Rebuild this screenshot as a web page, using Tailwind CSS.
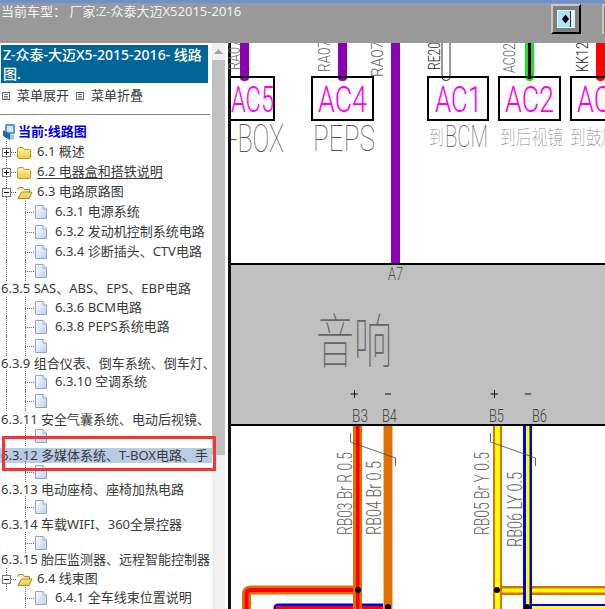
<!DOCTYPE html>
<html lang="zh">
<head>
<meta charset="utf-8">
<script src="https://cdn.jsdelivr.net/npm/@tailwindcss/browser@4"></script>
</head>
<body class="m-0 bg-white">
<svg width="0" height="0" class="absolute">
  <defs>
    <linearGradient id="dg" x1="0" y1="0" x2="1" y2="1"><stop offset="0" stop-color="#ffffff"/><stop offset="1" stop-color="#b9d0f2"/></linearGradient>
    <linearGradient id="fg" x1="0" y1="0" x2="0" y2="1"><stop offset="0" stop-color="#fff3b0"/><stop offset="1" stop-color="#f1c93f"/></linearGradient>
    <symbol id="doc" viewBox="0 0 12 14" width="12" height="14" overflow="visible">
      <path d="M.5.5H8L11.500 4V13.500H.5Z" fill="url(#dg)" stroke="#8ea4c8"/>
      <path d="M8 .5V4H11.500" fill="#fff" stroke="#8ea4c8"/>
    </symbol>
    <symbol id="leafA" viewBox="0 0 46 20" width="46" height="20" overflow="visible">
      <path d="M6.500 -1V21M25.500 -1V21M25 10.500H35" stroke="#666" stroke-dasharray="1 1" fill="none"/>
      <use href="#doc" x="35" y="3"/>
    </symbol>
    <symbol id="leafB" viewBox="0 0 46 20" width="46" height="20" overflow="visible">
      <path d="M25.500 -1V21M25 10.500H35" stroke="#666" stroke-dasharray="1 1" fill="none"/>
      <use href="#doc" x="35" y="3"/>
    </symbol>
    <symbol id="plus" viewBox="0 0 32 20" width="32" height="20" overflow="visible">
      <path d="M6.500 -1V21M11 10.500H17" stroke="#666" stroke-dasharray="1 1" fill="none"/>
      <rect x="2.500" y="6.500" width="8" height="8" fill="#fff" stroke="#777"/>
      <path d="M4 10.500H9M6.500 8V13" stroke="#111"/>
      <path d="M17.500 7.500Q17.500 5.500 19.500 5.500H23L24.500 7.500H29.500Q30.500 7.500 30.500 8.500V15.500Q30.500 16.500 29.500 16.500H18.500Q17.500 16.500 17.500 15.500Z" fill="url(#fg)" stroke="#b8982f"/>
    </symbol>
    <symbol id="minus" viewBox="0 0 32 20" width="32" height="20" overflow="visible">
      <path d="M6.500 -1V21M11 10.500H17" stroke="#666" stroke-dasharray="1 1" fill="none"/>
      <rect x="2.500" y="6.500" width="8" height="8" fill="#fff" stroke="#777"/>
      <path d="M4 10.500H9" stroke="#111"/>
      <path d="M17.500 7.500Q17.500 5.500 19.500 5.500H23L24.500 7.500H29.500V10H21.500L18 16.500H29L32 10H29" fill="url(#fg)" stroke="#a88a25"/>
    </symbol>
    <symbol id="mbox" viewBox="0 0 8 8" width="8" height="8">
      <rect x=".5" y=".5" width="7" height="7" fill="#fff" stroke="#666"/>
      <path d="M2 2.500H6M2 4.500H6M2 6H6" stroke="#555" stroke-width=".8"/>
    </symbol>
  </defs>
</svg>

<div class="relative w-[605px] h-[609px] overflow-hidden flex flex-col font-['Noto_Sans','Noto_Sans_CJK_SC',sans-serif] text-[13px] text-[#3a3a3a]">
  <!-- top bar -->
  <header class="h-[43px] shrink-0 bg-[#999999] border-t-[3px] border-[#6f8fd0] flex items-start justify-between">
    <div class="pl-px text-[13px] leading-[17px] text-[#f2f2f2] whitespace-nowrap">当前车型： 厂家:Z-众泰大迈X52015-2016</div>
    <div class="flex items-start gap-[21px] mt-px">
      <div class="w-[30px] h-[30px] bg-[#7f7f7f] border-2 border-t-[#c8c8c8] border-l-[#c8c8c8] border-r-black border-b-black flex items-center justify-center">
        <div class="w-[18px] h-[18px] bg-[#aee3ff] border border-[#dff] flex items-center justify-center relative">
          <svg width="16" height="16" viewBox="0 0 16 16"><path d="M7.500 3.500L11 8 7.500 12.500 4 8Z" fill="#000"/><path d="M14.500 0V16" stroke="#fff" stroke-width="2"/><path d="M12.500 0V16" stroke="#333"/></svg>
        </div>
      </div>
      <div class="w-[3px] h-[30px] border-l-2 border-t-2 border-[#c8c8c8] bg-[#7f7f7f]"></div>
    </div>
  </header>

  <div class="flex-1 flex min-h-0">
    <!-- sidebar -->
    <aside class="w-[228px] shrink-0 flex bg-white">
      <div class="w-[212px] shrink-0 overflow-hidden">
        <div class="mt-[2px] ml-px w-[207px] h-[38px] bg-[#006699] text-white text-[14px] leading-[19px] px-[2px] font-medium">Z-众泰-大迈X5-2015-2016- 线路图.</div>
        <div class="flex items-center h-[26px] pl-[2px]">
          <svg class="w-2 h-2"><use href="#mbox"/></svg>
          <span class="ml-[7px]">菜单展开</span>
          <svg class="w-2 h-2 ml-[7px]"><use href="#mbox"/></svg>
          <span class="ml-[7px]">菜单折叠</span>
        </div>
        <div class="mt-[5px] h-px w-[210px] bg-[#888]"></div>
        <ul class="mt-[7px] whitespace-nowrap">
          <li class="h-5 flex items-center"><svg class="ml-[2px] mr-[3px]" width="13" height="16" viewBox="0 0 13 16"><rect x="3" y="0" width="10" height="10" rx="1" fill="#5b9bd5"/><rect x="5" y="2" width="6" height="6" fill="#cfe8ff"/><path d="M1 6L8 10V16L1 12Z" fill="#2f5fb0"/><path d="M8 10L12 11V15L8 16Z" fill="#9fc4ea"/></svg><span class="font-bold text-[#0000ee]">当前:线路图</span></li>
          <li class="h-5 flex items-center"><svg class="w-8 h-5 mr-[5px] overflow-visible"><use href="#plus"/></svg><span>6.1 概述</span></li>
          <li class="h-5 flex items-center"><svg class="w-8 h-5 mr-[5px] overflow-visible"><use href="#plus"/></svg><span class="underline underline-offset-2">6.2 电器盒和搭铁说明</span></li>
          <li class="h-5 flex items-center"><svg class="w-8 h-5 mr-[5px] overflow-visible"><use href="#minus"/></svg><span>6.3 电路原路图</span></li>
          <li class="h-5 flex items-center"><svg class="w-[46px] h-5 mr-[9px] overflow-visible"><use href="#leafA"/></svg><span>6.3.1 电源系统</span></li>
          <li class="h-5 flex items-center"><svg class="w-[46px] h-5 mr-[9px] overflow-visible"><use href="#leafA"/></svg><span>6.3.2 发动机控制系统电路</span></li>
          <li class="h-5 flex items-center"><svg class="w-[46px] h-5 mr-[9px] overflow-visible"><use href="#leafA"/></svg><span>6.3.4 诊断插头、CTV电路</span></li>
          <li class="h-[18px] flex items-center"><svg class="w-[46px] h-5 overflow-visible"><use href="#leafA"/></svg></li>
          <li class="h-[18px] flex items-center pl-px">6.3.5 SAS、ABS、EPS、EBP电路</li>
          <li class="h-[19px] flex items-center"><svg class="w-[46px] h-5 mr-[9px] overflow-visible"><use href="#leafA"/></svg><span>6.3.6 BCM电路</span></li>
          <li class="h-5 flex items-center"><svg class="w-[46px] h-5 mr-[9px] overflow-visible"><use href="#leafA"/></svg><span>6.3.8 PEPS系统电路</span></li>
          <li class="h-[18px] flex items-center"><svg class="w-[46px] h-5 overflow-visible"><use href="#leafA"/></svg></li>
          <li class="h-[18px] flex items-center pl-px">6.3.9 组合仪表、倒车系统、倒车灯、</li>
          <li class="h-[18px] flex items-center"><svg class="w-[46px] h-5 mr-[9px] overflow-visible"><use href="#leafA"/></svg><span>6.3.10 空调系统</span></li>
          <li class="h-[19px] flex items-center"><svg class="w-[46px] h-5 overflow-visible"><use href="#leafA"/></svg></li>
          <li class="h-[19px] flex items-center pl-px">6.3.11 安全气囊系统、电动后视镜、</li>
          <li class="h-[19px] flex items-start"><svg class="w-[46px] h-5 -mt-[3px] overflow-visible"><use href="#leafB"/></svg></li>
          <li class="h-[15px] flex items-center pl-px bg-[#b8cce4]">6.3.12 多媒体系统、T-BOX电路、手</li>
          <li class="h-[18px] flex items-center"><svg class="w-[46px] h-5 overflow-visible"><use href="#leafB"/></svg></li>
          <li class="h-[18px] flex items-center pl-px">6.3.13 电动座椅、座椅加热电路</li>
          <li class="h-4 flex items-center"><svg class="w-[46px] h-5 overflow-visible"><use href="#leafB"/></svg></li>
          <li class="h-[19px] flex items-center pl-px">6.3.14 车载WIFI、360全景控器</li>
          <li class="h-[17px] flex items-center"><svg class="w-[46px] h-5 overflow-visible"><use href="#leafB"/></svg></li>
          <li class="h-[18px] flex items-center pl-px">6.3.15 胎压监测器、远程智能控制器</li>
          <li class="h-[19px] flex items-center"><svg class="w-8 h-5 mr-[5px] overflow-visible"><use href="#minus"/></svg><span>6.4 线束图</span></li>
          <li class="h-5 flex items-center"><svg class="w-[46px] h-5 mr-[9px] overflow-visible"><use href="#leafB"/></svg><span>6.4.1 全车线束位置说明</span></li>
        </ul>
      </div>
      <!-- scrollbar -->
      <div class="w-[13px] shrink-0 bg-[#f0f0f0] flex flex-col">
        <div class="h-[17px] flex items-center justify-center"><svg width="9" height="5" viewBox="0 0 9 5"><path d="M4.500 0L9 5H0Z" fill="#a6a6a6"/></svg></div>
        <div class="h-[395px] bg-[#c0c0c0]"></div>
      </div>
      <div class="w-[3px] shrink-0 bg-white"></div>
    </aside>

    <!-- wiring diagram -->
    <div class="flex-1 min-w-0">
      <svg width="377" height="566" viewBox="228 43 377 566" class="block bg-white">
        <rect x="228" y="43" width="3" height="566" fill="#111"/>
        <rect x="231" y="264" width="374" height="161" fill="#c0c0c0"/>
        <path d="M231 264H605M231 425H605" stroke="#000" stroke-width="2"/>

        <!-- top wires -->
        <path d="M240 43H249V78Q249 81 244.500 81Q240 81 240 78Z" fill="#8b00b0"/>
        <path d="M338 43H347V78Q347 81 342.500 81Q338 81 338 78Z" fill="#8b00b0"/>
        <rect x="391" y="43" width="9" height="220" fill="#8b00b0"/>
        <path d="M442 43V77Q442 80.500 446 80.500Q450 80.500 450 77V43" fill="#fff" stroke="#333"/>
        <path d="M525 43H534V77Q534 81 529.500 81Q525 81 525 77Z" fill="#19e619"/><rect x="528" y="43" width="3" height="36" fill="#000"/>
        <path d="M596 43H605V77Q605 81 600.500 81Q596 81 596 77Z" fill="#ff0000"/>

        <!-- connector boxes -->
        <g fill="#fff" stroke="#000" stroke-width="2" fill-opacity="0">
          <rect x="222" y="77" width="52" height="43"/>
          <rect x="312" y="77" width="61" height="43"/>
          <rect x="428" y="77" width="60" height="43"/>
          <rect x="499" y="77" width="61" height="43"/>
          <rect x="571" y="77" width="60" height="43"/>
        </g>
        <rect x="228" y="43" width="3" height="566" fill="#111"/>
        <g class="font-['Roboto',sans-serif]" font-weight="300" font-size="36" fill="#ff00ee">
          <text x="231" y="112" textLength="43" lengthAdjust="spacingAndGlyphs">AC5</text>
          <text x="318" y="112" textLength="49" lengthAdjust="spacingAndGlyphs">AC4</text>
          <text x="435" y="112" textLength="47" lengthAdjust="spacingAndGlyphs">AC1</text>
          <text x="505" y="112" textLength="49" lengthAdjust="spacingAndGlyphs">AC2</text>
          <text x="577" y="112" textLength="49" lengthAdjust="spacingAndGlyphs">AC3</text>
        </g>

        <!-- cad labels -->
        <g class="font-['Roboto',sans-serif]" font-weight="100" fill="#555">
          <text x="230" y="152" font-size="38" textLength="54" lengthAdjust="spacingAndGlyphs">-BOX</text>
          <text x="313" y="151" font-size="37" textLength="62" lengthAdjust="spacingAndGlyphs">PEPS</text>
          <text x="429" y="145" font-size="20" class="font-['Noto_Sans_CJK_SC',sans-serif]" fill="#888" textLength="15" lengthAdjust="spacingAndGlyphs">到</text>
          <text x="445" y="147" font-size="31" textLength="43" lengthAdjust="spacingAndGlyphs">BCM</text>
          <text x="500" y="145" font-size="20" textLength="63" class="font-['Noto_Sans_CJK_SC',sans-serif]" fill="#888" lengthAdjust="spacingAndGlyphs">到后视镜</text>
          <text x="570" y="145" font-size="20" textLength="47" class="font-['Noto_Sans_CJK_SC',sans-serif]" fill="#888" lengthAdjust="spacingAndGlyphs">到鼓风</text>
        </g>
        <g class="font-['Roboto',sans-serif]" font-weight="300" font-size="17" fill="#666">
          <text transform="translate(240 70) rotate(-90)" textLength="30" lengthAdjust="spacingAndGlyphs">RA07</text>
          <text transform="translate(330 72) rotate(-90)" textLength="32" lengthAdjust="spacingAndGlyphs">RA07</text>
          <text transform="translate(383 77) rotate(-90)" textLength="36" lengthAdjust="spacingAndGlyphs">RA07</text>
          <text transform="translate(440 70) rotate(-90)" textLength="28" lengthAdjust="spacingAndGlyphs" fill="#222">RE20</text>
          <text transform="translate(515 73) rotate(-90)" textLength="30" lengthAdjust="spacingAndGlyphs">AC02</text>
          <text transform="translate(588 72) rotate(-90)" textLength="30" lengthAdjust="spacingAndGlyphs" fill="#222">KK12</text>
          <text x="388" y="280" font-size="18" textLength="15" lengthAdjust="spacingAndGlyphs" fill="#555">A7</text>
          <text x="352" y="422" font-size="19" textLength="16" lengthAdjust="spacingAndGlyphs" fill="#444">B3</text>
          <text x="382" y="422" font-size="19" textLength="15" lengthAdjust="spacingAndGlyphs" fill="#444">B4</text>
          <text x="489" y="422" font-size="19" textLength="15" lengthAdjust="spacingAndGlyphs" fill="#444">B5</text>
          <text x="532" y="422" font-size="19" textLength="15" lengthAdjust="spacingAndGlyphs" fill="#444">B6</text>
          <text transform="translate(352 535) rotate(-90)" font-size="20" textLength="83" lengthAdjust="spacingAndGlyphs">RB03 Br R 0.5</text>
          <text transform="translate(381 535) rotate(-90)" font-size="20" textLength="74" lengthAdjust="spacingAndGlyphs">RB04 Br 0.5</text>
          <text transform="translate(489 535) rotate(-90)" font-size="20" textLength="83" lengthAdjust="spacingAndGlyphs">RB05 Br Y 0.5</text>
          <text transform="translate(522 547) rotate(-90)" font-size="20" textLength="75" lengthAdjust="spacingAndGlyphs">RB06 LY 0.5</text>
        </g>
        <text transform="translate(316 363) scale(1 1.55)" font-size="38" fill="#666" class="font-['Noto_Sans_CJK_SC',sans-serif]" font-weight="100">音响</text>
        <path d="M350.500 394H358M354.500 390V398M385 394H391M490.500 394H498M494.500 390V398M525 394H531" stroke="#111" fill="none"/>

        <!-- lower wires -->
        <path d="M357.500 590H250Q246.500 590 246.500 594V609" fill="none" stroke="#e07000" stroke-width="9"/>
        <path d="M357.500 590H250Q246.500 590 246.500 594V609" fill="none" stroke="#ff0000" stroke-width="4"/>
        <path d="M388 608H278" fill="none" stroke="#0000ee" stroke-width="9" stroke-linecap="round"/>
        <path d="M388 608H276" fill="none" stroke="#ff0000" stroke-width="4"/>
        <rect x="353" y="426" width="9" height="183" fill="#e07000"/><rect x="356" y="426" width="3.500" height="183" fill="#ff0000"/>
        <rect x="383" y="426" width="10" height="183" fill="#f0c090"/><rect x="384" y="426" width="8" height="183" fill="#e07000"/>

        <rect x="497" y="586" width="108" height="9" fill="#d87000"/><rect x="497" y="588.500" width="108" height="4" fill="#ffff00"/>
        <rect x="493" y="426" width="9" height="183" fill="#e07000"/><rect x="495" y="426" width="5" height="183" fill="#ffff00"/>
        <rect x="527" y="604" width="78" height="5" fill="#0000ee"/><rect x="532" y="606" width="73" height="3" fill="#ffff00"/>
        <rect x="523" y="426" width="9" height="183" fill="#0000ee"/><rect x="526" y="426" width="3.500" height="183" fill="#ffff00"/>

        <circle cx="358" cy="590" r="3" fill="#000"/>
        <circle cx="388" cy="607" r="3" fill="#000"/>
        <circle cx="497" cy="590" r="3" fill="#000"/>
        <circle cx="527" cy="607" r="3" fill="#000"/>

        <path d="M350.500 433V442L395.500 458V466M490.500 433V442L535.500 458V466" fill="none" stroke="#444" stroke-width=".8"/>
      </svg>
    </div>
  </div>

  <!-- red annotation frame -->
  <div class="absolute left-[2px] top-[436px] w-[214px] h-[35px] border-[3px] border-[#f53535]"></div>
</div>
</body>
</html>
